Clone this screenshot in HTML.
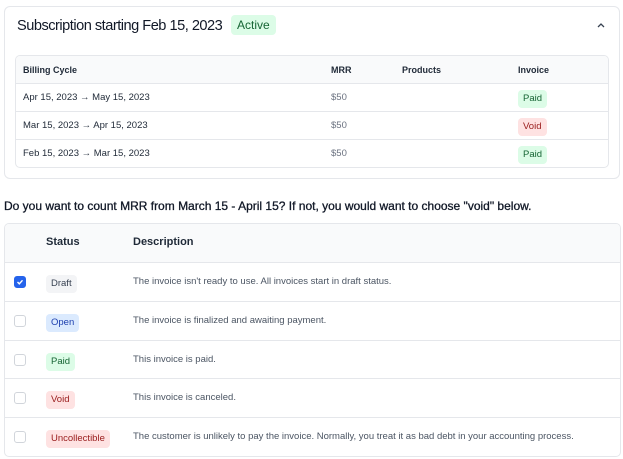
<!DOCTYPE html>
<html><head><style>
*{box-sizing:border-box;margin:0;padding:0}
body{width:623px;height:459px;background:#fff;font-family:"Liberation Sans",sans-serif;color:#1f2937;position:relative;overflow:hidden}
span,div{white-space:nowrap}
.card{position:absolute;left:4px;top:6px;width:616px;height:173px;border:1px solid #e5e7eb;border-radius:6px}
.title{position:absolute;left:12px;top:10px;font-size:14.6px;letter-spacing:-0.5px;color:#111827;line-height:18px}
.badge{display:inline-block;border-radius:4px;font-size:9.5px;padding:2px 5px;line-height:14px}
.green{background:#dcfce7;color:#166534}.red{background:#fee2e2;color:#991b1b}.blue{background:#dbeafe;color:#1e40af}.gray{background:#f3f4f6;color:#374151}
.t1{position:absolute;left:10px;top:48px;width:594px;height:113px;border:1px solid #e5e7eb;border-radius:5px;overflow:hidden}
.r{position:absolute;left:0;width:100%;border-top:1px solid #e5e7eb;font-size:9.5px}
.r span{position:absolute}
.t2{position:absolute;left:4px;top:223px;width:617px;height:234px;border:1px solid #e5e7eb;border-radius:5px;overflow:hidden}
.cb{position:absolute;left:9px;width:12px;height:12px;border:1px solid #d1d5db;border-radius:3px;background:#fff}
.d{font-size:9.5px}
</style></head><body>
<div class="card">
 <div class="title">Subscription starting Feb 15, 2023</div>
 <span class="badge green" style="position:absolute;left:226px;top:8px;font-size:12px;padding:3px 6px;line-height:14px">Active</span>
 <svg style="position:absolute;left:591px;top:14px" width="10" height="8" viewBox="0 0 10 8"><path d="M2 6 L5 3 L8 6" fill="none" stroke="#374151" stroke-width="1.3"/></svg>
 <div class="t1">
  <div class="r" style="top:0;height:27px;border-top:none;background:#f9fafb;font-weight:bold;font-size:9px"><span style="left:7px;top:9px">Billing Cycle</span><span style="left:315px;top:9px">MRR</span><span style="left:386px;top:9px">Products</span><span style="left:502px;top:9px">Invoice</span></div>
  <div class="r" style="top:27px;height:28px"><span style="left:7px;top:8px">Apr 15, 2023 → May 15, 2023</span><span style="left:315px;top:8px;color:#6b7280">$50</span><span style="left:502px;top:6px" class="badge green">Paid</span></div>
  <div class="r" style="top:55px;height:28px"><span style="left:7px;top:8px">Mar 15, 2023 → Apr 15, 2023</span><span style="left:315px;top:8px;color:#6b7280">$50</span><span style="left:502px;top:6px" class="badge red">Void</span></div>
  <div class="r" style="top:83px;height:28px"><span style="left:7px;top:8px">Feb 15, 2023 → Mar 15, 2023</span><span style="left:315px;top:8px;color:#6b7280">$50</span><span style="left:502px;top:6px" class="badge green">Paid</span></div>
 </div>
</div>
<div style="position:absolute;left:4px;top:199px;font-size:12px;color:#111827;-webkit-text-stroke:0.3px #111827">Do you want to count MRR from March 15 - April 15? If not, you would want to choose "void" below.</div>
<div class="t2">
 <div class="r" style="top:0;height:38px;border-top:none;background:#f9fafb;font-weight:bold;font-size:11px"><span style="left:41px;top:12px">Status</span><span style="left:128px;top:12px">Description</span></div>
 <div class="r" style="top:38px;height:39px;color:#4b5563"><div class="cb" style="top:13px;background:#2563eb;border-color:#2563eb"><svg width="10" height="10" viewBox="0 0 10 10" style="position:absolute;left:0;top:0"><path d="M2.5 5 L4.3 6.8 L7.5 3.3" fill="none" stroke="#fff" stroke-width="1.4"/></svg></div><span class="badge gray" style="left:41px;top:12px">Draft</span><span class="d" style="left:128px;top:13px">The invoice isn't ready to use. All invoices start in draft status.</span></div>
 <div class="r" style="top:77px;height:39px;color:#4b5563"><div class="cb" style="top:13px"></div><span class="badge blue" style="left:41px;top:12px">Open</span><span class="d" style="left:128px;top:13px">The invoice is finalized and awaiting payment.</span></div>
 <div class="r" style="top:116px;height:38px;color:#4b5563"><div class="cb" style="top:13px"></div><span class="badge green" style="left:41px;top:12px">Paid</span><span class="d" style="left:128px;top:13px">This invoice is paid.</span></div>
 <div class="r" style="top:154px;height:39px;color:#4b5563"><div class="cb" style="top:13px"></div><span class="badge red" style="left:41px;top:12px">Void</span><span class="d" style="left:128px;top:13px">This invoice is canceled.</span></div>
 <div class="r" style="top:193px;height:41px;color:#4b5563"><div class="cb" style="top:13px"></div><span class="badge red" style="left:41px;top:12px">Uncollectible</span><span class="d" style="left:128px;top:13px">The customer is unlikely to pay the invoice. Normally, you treat it as bad debt in your accounting process.</span></div>
</div>
</body></html>
